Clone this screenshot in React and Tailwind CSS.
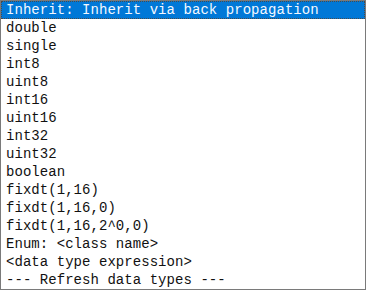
export default function App() {
  const items = [
    "double",
    "single",
    "int8",
    "uint8",
    "int16",
    "uint16",
    "int32",
    "uint32",
    "boolean",
    "fixdt(1,16)",
    "fixdt(1,16,0)",
    "fixdt(1,16,2^0,0)",
    "Enum: <class name>",
    "<data type expression>",
    "--- Refresh data types ---",
  ];
  return (
    <div
      className="w-[366px] h-[290px] bg-white border border-[#7a7a7a] overflow-hidden text-[14px] leading-[18px] tracking-[0.05px] text-[#111]"
      style={{ fontFamily: '"Liberation Mono", "Noto Sans CJK SC", monospace' }}
    >
      <div className="h-[18px] bg-[#0078d7] text-[#f4f8ff] border border-dotted border-[#4a4a4a] pl-[4px] leading-[16px] whitespace-pre">
        Inherit: Inherit via back propagation
      </div>
      {items.map((t) => (
        <div key={t} className="h-[18px] pl-[5px] whitespace-pre">
          {t}
        </div>
      ))}
    </div>
  );
}
